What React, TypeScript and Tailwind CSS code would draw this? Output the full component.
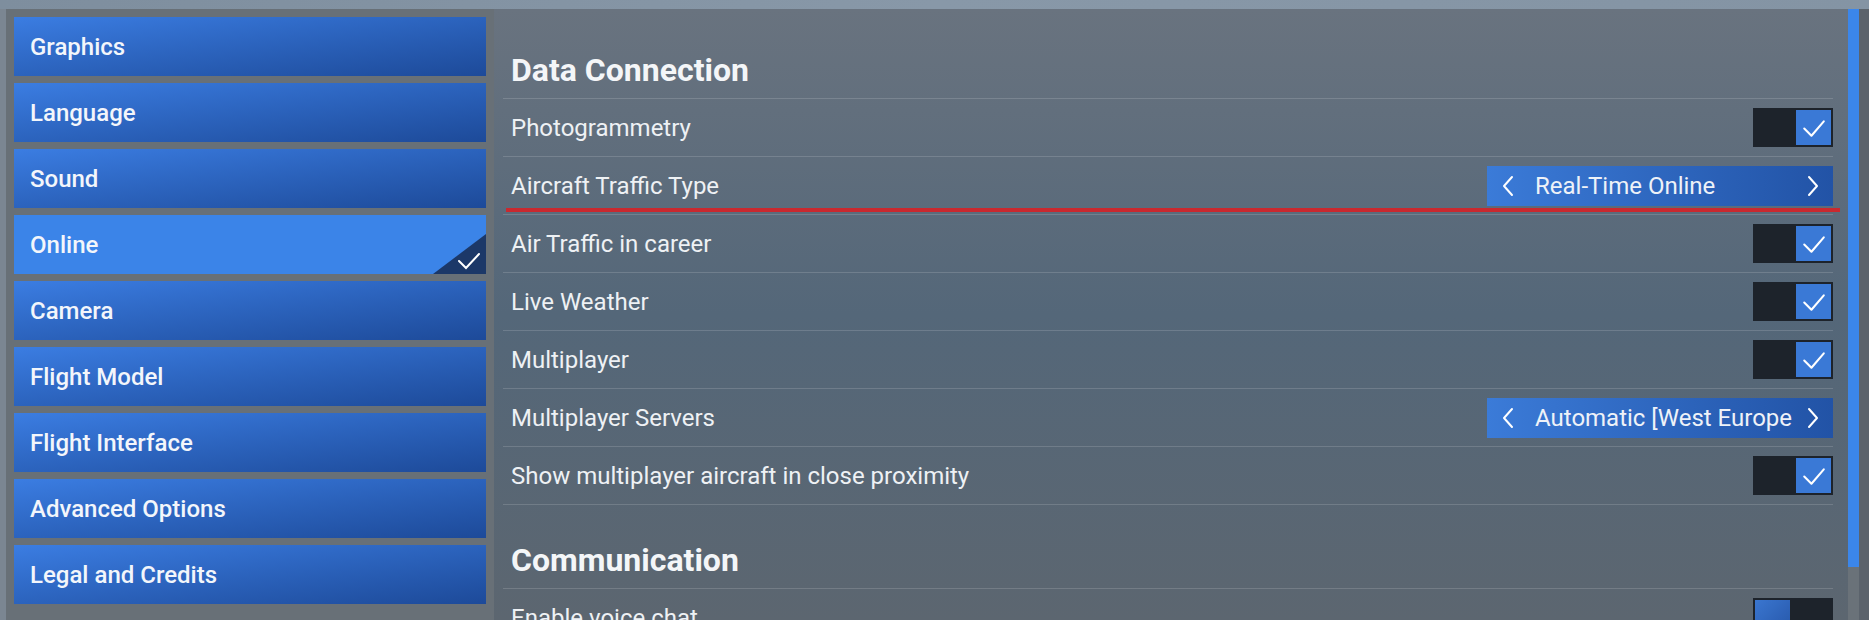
import React from "react";

const menu = [
  "Graphics",
  "Language",
  "Sound",
  "Online",
  "Camera",
  "Flight Model",
  "Flight Interface",
  "Advanced Options",
  "Legal and Credits",
];

type Row =
  | { label: string; kind: "toggle"; on: boolean; focus?: boolean }
  | { label: string; kind: "select"; value: string; focus?: boolean };

const sections: { title: string; rows: Row[] }[] = [
  {
    title: "Data Connection",
    rows: [
      { label: "Photogrammetry", kind: "toggle", on: true },
      { label: "Aircraft Traffic Type", kind: "select", value: "Real-Time Online", focus: true },
      { label: "Air Traffic in career", kind: "toggle", on: true },
      { label: "Live Weather", kind: "toggle", on: true },
      { label: "Multiplayer", kind: "toggle", on: true },
      { label: "Multiplayer Servers", kind: "select", value: "Automatic [West Europe" },
      { label: "Show multiplayer aircraft in close proximity", kind: "toggle", on: true },
    ],
  },
  {
    title: "Communication",
    rows: [{ label: "Enable voice chat", kind: "toggle", on: false }],
  },
];

const Check = ({ className }: { className?: string }) => (
  <svg viewBox="0 0 34 34" className={className} fill="none" stroke="white" strokeWidth={2} strokeLinecap="round" strokeLinejoin="round">
    <polyline points="8,18 15,25 27,11" />
  </svg>
);

const Toggle = ({ on }: { on: boolean }) => (
  <div className={`w-[80px] h-[39px] bg-[#1d232b] p-[2px] flex ${on ? "justify-end" : "justify-start"}`}>
    <div className={`w-[35px] h-[35px] ${on ? "bg-[#3a79d6]" : "bg-linear-to-br from-[#3a76d0] to-[#2656a8]"}`}>
      {on && <Check className="w-full h-full" />}
    </div>
  </div>
);

const Chevron = ({ dir }: { dir: "l" | "r" }) => (
  <svg viewBox="0 0 14 24" className="w-[14px] h-[24px] shrink-0" fill="none" stroke="white" strokeWidth={2} strokeLinecap="round" strokeLinejoin="round">
    <polyline points={dir === "l" ? "11,3 3,12 11,21" : "3,3 11,12 3,21"} />
  </svg>
);

const Selector = ({ value }: { value: string }) => (
  <div className="w-[346px] h-[40px] flex items-center pl-[14px] pr-[13px] bg-linear-to-r from-[#3b7bd8] to-[#2253a6]">
    <Chevron dir="l" />
    <span className="flex-1 ml-[20px] mr-[6px] whitespace-nowrap text-[24px] leading-[32px] text-[#eef2f8]">{value}</span>
    <Chevron dir="r" />
  </div>
);

const SettingRow = ({ row }: { row: Row }) => (
  <div className="relative h-[58px] border-t border-white/15 flex items-center justify-between pl-[8px]">
    <span className="text-[24px] text-[#eef1f4]">{row.label}</span>
    {row.kind === "toggle" ? <Toggle on={row.on} /> : <Selector value={row.value} />}
    {row.focus && <div className="absolute left-[3px] right-[-7px] bottom-[2px] h-[4px] bg-[#c9292f]" />}
  </div>
);

const MenuItem = ({ label, active }: { label: string; active: boolean }) => (
  <div
    className={`relative h-[59px] shrink-0 flex items-center pl-[16px] text-[24px] font-medium text-[#f3f6fb] ${
      active ? "bg-[#3b84e8]" : "bg-linear-to-br from-[#3b7de2] to-[#1d4a99]"
    }`}
  >
    {label}
    {active && (
      <div className="absolute right-0 bottom-0 w-[53px] h-[40px] bg-[#1c3868] [clip-path:polygon(100%_0,100%_100%,0_100%)]">
        <svg viewBox="0 0 53 40" className="w-full h-full" fill="none" stroke="white" strokeWidth={2} strokeLinecap="round">
          <polyline points="26,27 33,34 46,20" />
        </svg>
      </div>
    )}
  </div>
);

export default function App() {
  return (
    <div className="w-[1869px] h-[620px] overflow-hidden flex flex-col font-['Roboto',sans-serif] bg-[#8696a6]">
      <div className="h-[9px] shrink-0 bg-linear-to-r from-[#7e8e9e] via-[#8898a8] to-[#8494a4]" />
      <div className="flex-1 flex min-h-0">
        <div className="w-[6px] shrink-0 bg-[#7b8692]" />
        <div className="w-[488px] shrink-0 bg-[#687077] pl-[8px] pr-[8px] pt-[8px] flex flex-col gap-[7px]">
          {menu.map((m) => (
            <MenuItem key={m} label={m} active={m === "Online"} />
          ))}
        </div>
        <div className="flex-1 flex bg-linear-to-b from-[#69737f] via-[#546779] to-[#5c6670]">
          <div className="flex-1 pl-[9px] pr-[15px] pt-[6px] text-white">
            {sections.map((s) => (
              <div key={s.title}>
                <div className="h-[83px] flex items-end pb-[9px] pl-[8px] text-[32px] leading-[38px] font-bold text-[#f4f6f8]">
                  {s.title}
                </div>
                {s.rows.map((r) => (
                  <SettingRow key={r.label} row={r} />
                ))}
                <div className="border-t border-white/15" />
              </div>
            ))}
          </div>
          <div className="w-[11px] shrink-0 flex flex-col">
            <div className="h-[558px] bg-[#3b86ea]" />
            <div className="flex-1 bg-[#6a7279]" />
          </div>
          <div className="w-[10px] shrink-0 bg-[#5b636c]" />
        </div>
      </div>
    </div>
  );
}
